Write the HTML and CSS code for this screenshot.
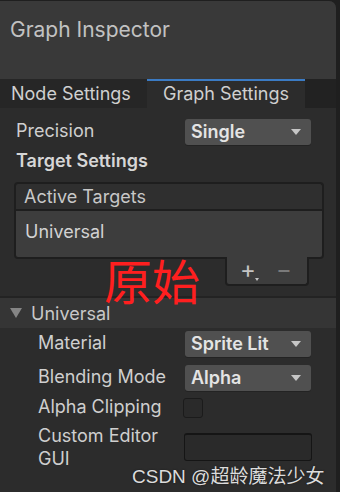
FILE: index.html
```html
<!DOCTYPE html>
<html>
	<head>
		<meta charset="utf-8">
		<title>Graph Inspector</title>
		<link rel="stylesheet" href="styles.css">
	</head>
	<body>
		<div class="panel">
			<div class="header">Graph Inspector</div>
			<div class="tabs">
				<div class="tab">Node Settings</div>
				<div class="tab active">Graph Settings</div>
			</div>
			<div class="content">
				<div class="row first">
					<div class="label">Precision</div>
					<div class="dropdown">Single<span class="arrow"></span></div>
				</div>
				<div class="section-title">Target Settings</div>
				<div class="list">
					<div class="list-head">Active Targets</div>
					<div class="list-body">Universal</div>
					<div class="list-foot">
						<span class="plus">+<span class="dot"></span></span>
						<span class="minus">&minus;</span>
					</div>
				</div>
				<div class="foldout"><span class="fold-arrow"></span>Universal</div>
				<div class="sub">
					<div class="row">
						<div class="label">Material</div>
						<div class="dropdown">Sprite Lit<span class="arrow"></span></div>
					</div>
					<div class="row">
						<div class="label">Blending Mode</div>
						<div class="dropdown">Alpha<span class="arrow"></span></div>
					</div>
					<div class="row check-row">
						<div class="label">Alpha Clipping</div>
						<div class="checkbox"></div>
					</div>
					<div class="row gui-row">
						<div class="label">Custom Editor<br>GUI</div>
						<div class="textfield"></div>
					</div>
				</div>
			</div>
			<div class="stamp">原始</div>
			<div class="watermark">CSDN @超龄魔法少女</div>
		</div>
	</body>
</html>
```

FILE: styles.css
```css
body {
	margin: 0;
	background: #1f1f1f;
	font-family: Inter, "Noto Sans", "Noto Sans CJK SC", sans-serif;
	font-size: 18px;
	color: #cdcdcd;
}

.panel {
	position: relative;
	width: 336px;
	height: 491px;
	margin-top: 1px;
	background: #2c2c2c;
	border-top-right-radius: 7px;
	overflow: hidden;
}

.header {
	height: 78px;
	box-sizing: border-box;
	padding: 16px 0 0 10px;
	background: #393939;
	font-size: 21px;
	line-height: 26px;
	color: #c2c2c2;
}

.tabs {
	display: flex;
	height: 29px;
	background: #222222;
}

.tab {
	width: 147px;
	box-sizing: border-box;
	padding: 4px 0 0 11px;
	background: #262626;
	line-height: 22px;
	color: #d0d0d0;
}

.tab.active {
	width: 158px;
	padding: 2px 0 0 16px;
	background: #2c2c2c;
	border-top: 2px solid #3b7bc4;
}

.content {
	padding-top: 11px;
}

.row {
	display: flex;
	align-items: center;
	height: 26px;
	padding-left: 16px;
	margin-bottom: 8px;
}

.label {
	width: 169px;
	margin-top: -3px;
	line-height: 22px;
	color: #cfcfcf;
}

.dropdown {
	position: relative;
	width: 126px;
	height: 26px;
	box-sizing: border-box;
	padding: 2px 0 0 6px;
	background: #505050;
	border-radius: 3px;
	box-shadow: 0 1px 0 #232323;
	font-weight: 600;
	line-height: 22px;
	color: #e4e4e4;
}

.arrow {
	position: absolute;
	right: 10px;
	top: 10px;
	border-left: 5px solid transparent;
	border-right: 5px solid transparent;
	border-top: 6px solid #c6c6c6;
}

.section-title {
	padding-left: 16px;
	margin-top: -4px;
	font-weight: 600;
	line-height: 24px;
	color: #d6d6d6;
}

.list {
	display: flex;
	flex-direction: column;
	margin: 9px 0 0 14px;
	width: 310px;
}

.list-head {
	height: 27px;
	box-sizing: border-box;
	padding: 2px 0 0 8px;
	border: 2px solid #1e1e1e;
	border-bottom: none;
	border-radius: 4px 4px 0 0;
	background: #2f2f2f;
	line-height: 22px;
	color: #c8c8c8;
}

.list-body {
	height: 50px;
	box-sizing: border-box;
	padding: 10px 0 0 9px;
	border: 2px solid #1e1e1e;
	border-radius: 0 0 4px 4px;
	background: #3d3d3d;
	line-height: 22px;
	color: #d2d2d2;
}

.list-foot {
	align-self: flex-end;
	display: flex;
	gap: 20px;
	width: 84px;
	height: 29px;
	box-sizing: border-box;
	margin: -2px 15px 0 0;
	padding: 0 0 0 13px;
	border: 2px solid #1e1e1e;
	border-top: none;
	border-radius: 0 0 4px 4px;
	background: #3d3d3d;
	font-size: 24px;
	line-height: 26px;
	color: #c4c4c4;
}

.plus {
	position: relative;
}

.dot {
	position: absolute;
	right: -3px;
	bottom: 3px;
	border-left: 2px solid transparent;
	border-right: 2px solid transparent;
	border-top: 3px solid #c4c4c4;
}

.minus {
	color: #7a7a7a;
}

.foldout {
	display: flex;
	align-items: center;
	height: 30px;
	margin-top: 10px;
	padding-left: 10px;
	border-top: 2px solid #232323;
	background: #353535;
	color: #c8c8c8;
}

.fold-arrow {
	margin-right: 9px;
	border-left: 6px solid transparent;
	border-right: 6px solid transparent;
	border-top: 10px solid #858585;
}

.sub {
	padding-top: 3px;
}

.sub .row {
	padding-left: 38px;
}

.sub .label {
	width: 147px;
}

.check-row {
	height: 22px;
	margin-top: -2px;
	margin-bottom: 5px;
}

.check-row .checkbox {
	width: 18px;
	height: 18px;
	margin-left: -2px;
	border: 1px solid #1b1b1b;
	border-radius: 3px;
	background: #2a2a2a;
}

.gui-row {
	height: auto;
	align-items: flex-start;
}

.gui-row .label {
	margin-top: 0;
	line-height: 23px;
}

.textfield {
	width: 126px;
	height: 25px;
	margin: 9px 0 0 -1px;
	border: 1px solid #151515;
	border-top-width: 2px;
	border-radius: 3px;
	background: #2a2a2a;
}

.stamp {
	position: absolute;
	left: 104px;
	top: 246px;
	font-family: "Noto Sans CJK SC", sans-serif;
	font-size: 48px;
	line-height: 64px;
	color: #ff1f1f;
}

.watermark {
	position: absolute;
	left: 132px;
	top: 463px;
	font-family: "Liberation Sans", "Noto Sans CJK SC", sans-serif;
	font-size: 19px;
	line-height: 26px;
	color: #dcdcdc;
	text-shadow: 0 0 2px #1a1a1a;
}
```
